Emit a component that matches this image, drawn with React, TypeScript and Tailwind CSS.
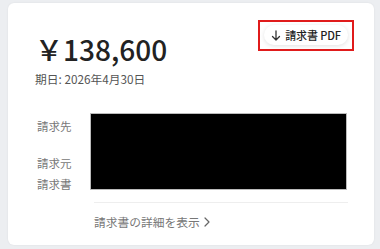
import React from "react";

const font = { fontFamily: '"Noto Sans CJK JP", "Noto Sans", sans-serif' };

const App: React.FC = () => {
  return (
    <div
      className="h-[249px] w-[380px] overflow-hidden bg-[#eceef1] pl-[8px] pr-[6px] pt-[3px] pb-[4px]"
      style={font}
    >
      <article className="flex h-full flex-col rounded-md bg-white pl-[27px] pr-[26px] shadow-[0_0_2px_rgba(0,0,0,0.08)]">
        <section className="relative pt-[32px]">
          <h2 className="text-[28px] font-medium leading-[28px] text-[#222]">￥138,600</h2>
          <p className="mt-[8px] text-[11.75px] leading-[16px] text-[#555]">期日: 2026年4月30日</p>
          <div className="absolute right-[-6px] top-[17px] border-2 border-[#e01b1b] px-[4px] pt-[3px] pb-[4px]">
            <button className="flex h-[20px] items-center gap-[4px] rounded-full bg-white pl-[7px] pr-[7px] text-[11px] font-medium tracking-[-0.1px] text-[#222] shadow-[0_1px_4px_rgba(0,0,0,0.12)]">
              <svg width="10" height="11" viewBox="0 0 10 11" fill="none" stroke="#333" strokeWidth="1.3" strokeLinecap="round" strokeLinejoin="round">
                <path d="M5 1v9M1.5 6.5 5 10l3.5-3.5" />
              </svg>
              請求書 PDF
            </button>
          </div>
        </section>

        <section className="mt-[26px] flex">
          <div className="flex w-[55px] flex-col pl-[2px] text-[11.5px] text-[#777]">
            <span className="mt-[5px] leading-[16px]">請求先</span>
            <span className="mt-[21px] leading-[16px]">請求元</span>
            <span className="mt-[5px] leading-[16px]">請求書</span>
          </div>
          <div className="h-[77px] w-[257px] border border-[#bbb] bg-black" />
        </section>

        <div className="ml-[59px] mt-[10px] h-px bg-[#eeeeee]" />

        <a className="ml-[59px] mt-[11px] flex items-center gap-[4px] text-[11.75px] leading-[16px] text-[#777]">
          請求書の詳細を表示
          <svg width="6" height="10" viewBox="0 0 6 10" fill="none" stroke="#666" strokeWidth="1.2" strokeLinecap="round" strokeLinejoin="round">
            <path d="M1 1l4 4-4 4" />
          </svg>
        </a>
      </article>
    </div>
  );
};

export default App;
